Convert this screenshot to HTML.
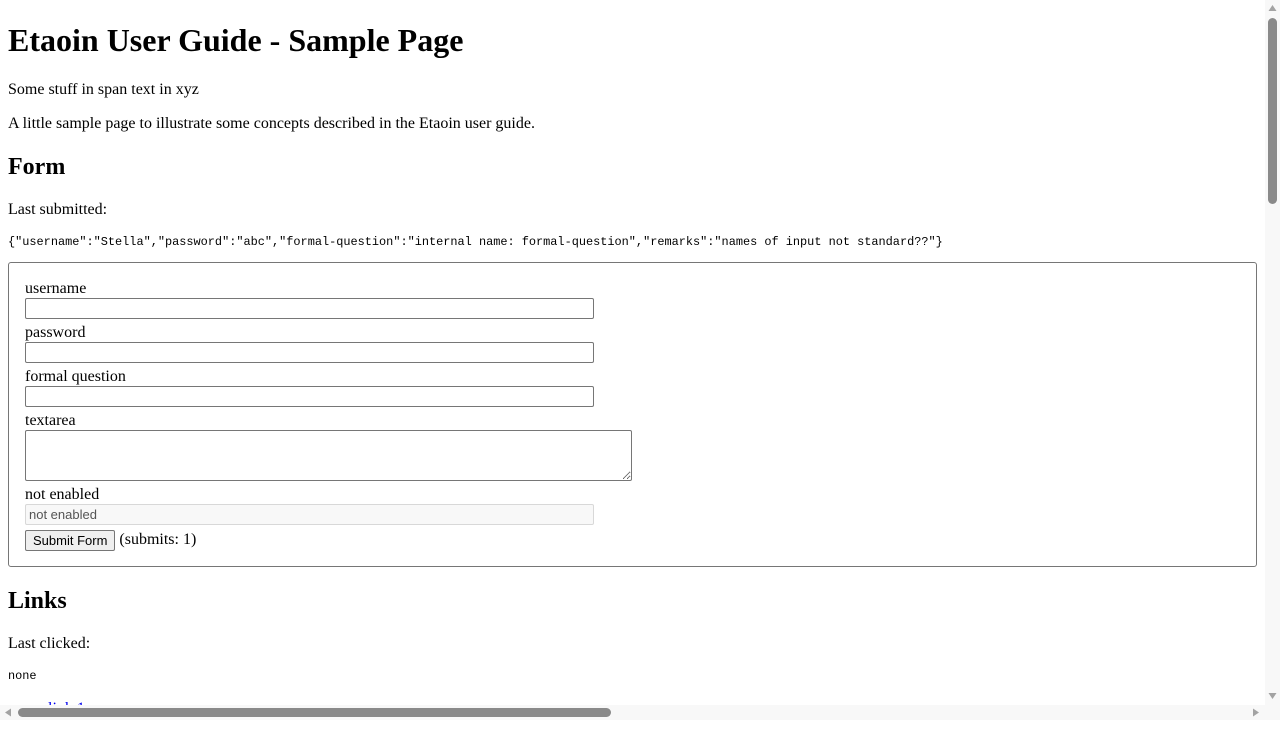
<!DOCTYPE html>
<html><head><style>
html,body{margin:0;padding:0;overflow:hidden;width:1280px;height:720px;background:#fff}
body{font-family:"Liberation Serif",serif;font-size:16px;color:#000}
.wrap{position:absolute;left:8px;top:1px;width:1249px}
h1{font-size:32px;margin:21.44px 0;line-height:37px}
h2{font-size:24px;margin:19.92px 0;line-height:28px}
p{margin:16px 0;line-height:18px}
pre{font-family:"Liberation Mono",monospace;font-size:11.9px;margin:7px 0 10px;line-height:15px}
pre.n{margin:8px 0 14px}
fieldset{margin:12px 0 0;padding:17px 16px 15px;border:1px solid #767676;border-radius:3px}
label{display:block;line-height:18px}
input.t{display:block;box-sizing:border-box;width:569px;height:21px;border:1px solid #767676;border-radius:2px;margin:0 0 5px;padding:1px 3px;font-family:"Liberation Sans",sans-serif;font-size:13px}
input.d{background:#f8f8f8;border-color:#d8d8d8;color:#555}
textarea{display:block;box-sizing:border-box;width:607px;height:51px;border:1px solid #767676;border-radius:2px;margin:0 0 5px}
button{font-family:"Liberation Sans",sans-serif;font-size:13px;height:21px;padding:1px 7px;border:1px solid #767676;border-radius:2px;background:#efefef;vertical-align:middle}
ul{margin:16px 0;padding-left:40px}
a{color:#0000ee}
.vs{position:fixed;right:0;top:0;width:15px;height:705px;background:#f8f8f8}
.hs{position:fixed;left:0;bottom:0;width:1265px;height:15px;background:#f8f8f8}
.corner{position:fixed;right:0;bottom:0;width:15px;height:15px;background:#f8f8f8}
</style></head><body>
<div class="wrap">
<h1>Etaoin User Guide - Sample Page</h1>
<p>Some stuff in span text in xyz</p>
<p>A little sample page to illustrate some concepts described in the Etaoin user guide.</p>
<h2>Form</h2>
<p>Last submitted:</p>
<pre>{"username":"Stella","password":"abc","formal-question":"internal name: formal-question","remarks":"names of input not standard??"}</pre>
<fieldset>
<label>username</label><input class="t">
<label>password</label><input class="t" type="password">
<label>formal question</label><input class="t">
<label>textarea</label><textarea></textarea>
<label>not enabled</label><input class="t d" value="not enabled" disabled>
<div style="margin-top:1px"><button>Submit Form</button> (submits: 1)</div>
</fieldset>
<h2>Links</h2>
<p>Last clicked:</p>
<pre class="n">none</pre>
<ul><li><a href="#">link 1</a></li></ul>
</div>
<div class="vs">
<svg width="15" height="705" style="position:absolute;left:0;top:0">
<polygon points="3.5,11 7.5,5 11.5,11" fill="#a3a3a3"/>
<rect x="3" y="18" width="9" height="186" rx="4.5" fill="#8a8a8a"/>
<polygon points="3.5,693 7.5,699 11.5,693" fill="#a3a3a3"/>
</svg></div>
<div class="hs">
<svg width="1265" height="15" style="position:absolute;left:0;top:0">
<polygon points="11,3.5 5,7.5 11,11.5" fill="#a3a3a3"/>
<rect x="18" y="3" width="593" height="9" rx="4.5" fill="#8a8a8a"/>
<polygon points="1253,3.5 1259,7.5 1253,11.5" fill="#a3a3a3"/>
</svg></div>
<div class="corner"></div>
</body></html>
